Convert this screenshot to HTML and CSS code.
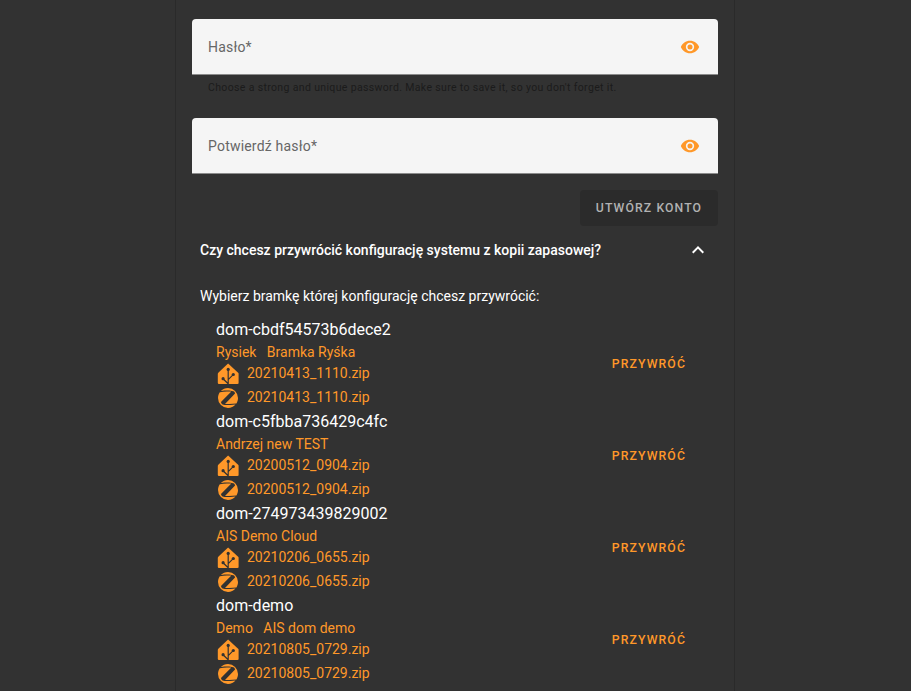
FILE: index.html
```
<!DOCTYPE html>
<html lang="pl">
<head>
<meta charset="utf-8">
<title>AIS dom</title>
<link rel="stylesheet" href="styles.css">
</head>
<body>
<svg class="sprite" aria-hidden="true">
  <symbol id="eye" viewBox="0 0 24 24"><path d="M12,9A3,3 0 0,0 9,12A3,3 0 0,0 12,15A3,3 0 0,0 15,12A3,3 0 0,0 12,9M12,17A5,5 0 0,1 7,12A5,5 0 0,1 12,7A5,5 0 0,1 17,12A5,5 0 0,1 12,17M12,4.5C7,4.5 2.73,7.61 1,12C2.73,16.39 7,19.5 12,19.5C17,19.5 21.27,16.39 23,12C21.27,7.61 17,4.5 12,4.5Z"/></symbol>
  <symbol id="home" viewBox="0 0 24 24">
    <path d="M12.1,1.6L22.1,10.8Q22.6,11.3 22.6,12V21Q22.6,22.1 21.4,22.1H3Q1.8,22.1 1.8,21V12Q1.8,11.3 2.3,10.8Z"/>
    <path class="branch" d="M12.2,7V23M12.2,17.6L17.2,12.6M12.2,21.8L7,16.8"/>
    <circle class="node" cx="12.2" cy="7.4" r="1.6"/><circle class="node" cx="17.3" cy="12.5" r="1.6"/><circle class="node" cx="7.1" cy="16.7" r="1.6"/>
  </symbol>
  <symbol id="zigbee" viewBox="0 0 24 24"><path d="M4.06,6.15C3.97,6.17 3.88,6.22 3.8,6.28C2.66,7.9 2,9.87 2,12A10,10 0 0,0 12,22C15,22 17.68,20.68 19.5,18.6L17,18.85C14.25,19.15 11.45,19.19 8.66,18.96C7.95,18.94 7.24,18.76 6.59,18.45C5.73,18.06 5.15,17.23 5.07,16.29C5.06,16.13 5.12,16 5.23,15.87L7.42,13.6L15.1,5.7V5.6H10.84C8.57,5.64 6.31,5.82 4.06,6.15M20.17,17.5C20.26,17.47 20.35,17.44 20.43,17.39C21.42,15.83 22,14 22,12A10,10 0 0,0 12,2C9.22,2 6.7,3.13 4.89,4.97H5.17C8.28,4.57 11.43,4.47 14.56,4.65C15.5,4.64 16.45,4.82 17.33,5.17C18.25,5.53 18.89,6.38 19,7.37C19,7.53 18.93,7.7 18.82,7.82L9.71,17.19L9,17.95V18.06H13.14C15.5,18 17.84,17.81 20.17,17.5Z"/></symbol>
  <symbol id="chevron" viewBox="0 0 24 24"><path d="M7.41,15.41L12,10.83L16.59,15.41L18,14L12,8L6,14L7.41,15.41Z"/></symbol>
</svg>
<main class="card">
  <div class="field"><span>Hasło*</span><svg class="eye"><use href="#eye"/></svg></div>
  <p class="helper">Choose a strong and unique password. Make sure to save it, so you don't forget it.</p>
  <div class="field"><span>Potwierdź hasło*</span><svg class="eye"><use href="#eye"/></svg></div>
  <div class="actions"><button class="create">Utwórz konto</button></div>
  <div class="panel-head"><span>Czy chcesz przywrócić konfigurację systemu z kopii zapasowej?</span><svg class="icon"><use href="#chevron"/></svg></div>
  <p class="intro">Wybierz bramkę której konfigurację chcesz przywrócić:</p>
  <ul class="gates">
    <li class="gate">
      <div><div class="name">dom-cbdf54573b6dece2</div><div class="users">Rysiek &nbsp; Bramka Ryśka</div>
      <div class="file"><svg class="icon"><use href="#home"/></svg><span>20210413_1110.zip</span></div>
      <div class="file"><svg class="icon"><use href="#zigbee"/></svg><span>20210413_1110.zip</span></div></div>
      <button class="restore">Przywróć</button>
    </li>
    <li class="gate">
      <div><div class="name">dom-c5fbba736429c4fc</div><div class="users">Andrzej new TEST</div>
      <div class="file"><svg class="icon"><use href="#home"/></svg><span>20200512_0904.zip</span></div>
      <div class="file"><svg class="icon"><use href="#zigbee"/></svg><span>20200512_0904.zip</span></div></div>
      <button class="restore">Przywróć</button>
    </li>
    <li class="gate">
      <div><div class="name">dom-274973439829002</div><div class="users">AIS Demo Cloud</div>
      <div class="file"><svg class="icon"><use href="#home"/></svg><span>20210206_0655.zip</span></div>
      <div class="file"><svg class="icon"><use href="#zigbee"/></svg><span>20210206_0655.zip</span></div></div>
      <button class="restore">Przywróć</button>
    </li>
    <li class="gate">
      <div><div class="name">dom-demo</div><div class="users">Demo &nbsp; AIS dom demo</div>
      <div class="file"><svg class="icon"><use href="#home"/></svg><span>20210805_0729.zip</span></div>
      <div class="file"><svg class="icon"><use href="#zigbee"/></svg><span>20210805_0729.zip</span></div></div>
      <button class="restore">Przywróć</button>
    </li>
  </ul>
</main>
</body>
</html>
```
FILE: styles.css
```
* { box-sizing: border-box; }
body {
  margin: 0;
  height: 691px;
  overflow: hidden;
  background: #323232;
  color: #fff;
  font: 14px/20px Roboto, sans-serif;
}
p, ul { margin: 0; padding: 0; list-style: none; }
button { border: 0; font: 500 12.25px/36px Roboto, sans-serif; letter-spacing: 0.0892857em; text-transform: uppercase; }
.sprite { display: none; }
.icon { width: 24px; height: 24px; flex: none; fill: currentColor; }
.card {
  width: 560px;
  height: 720px;
  margin-left: 175px;
  padding: 19px 16px 0;
  border: solid #2a2a2a;
  border-width: 0 1px;
}
.field {
  display: flex;
  align-items: center;
  justify-content: space-between;
  height: 56px;
  padding: 0 18px 0 16px;
  border-bottom: 1px solid #8b8b8b;
  border-radius: 4px 4px 0 0;
  background: #f5f5f5;
  color: #666;
  letter-spacing: 0.2px;
}
.eye { width: 20px; height: 20px; fill: #ff9829; }
.helper { height: 43px; padding: 3px 16px 0; color: #1b1b1b; font-size: 10.5px; letter-spacing: 0.35px; }
.actions { display: flex; justify-content: flex-end; padding-top: 16px; }
.create { width: 138px; height: 36px; padding: 0; border-radius: 4px; background: #2b2b2b; color: #b2b2b2; }
.panel-head { display: flex; align-items: center; justify-content: space-between; height: 48px; padding: 0 8px; font-weight: 500; }
.intro { margin-top: 12px; padding-left: 8px; }
.gates { margin-top: 12px; padding: 0 24px; }
.gate { display: flex; align-items: center; justify-content: space-between; height: 92px; }
.name { font-size: 16px; line-height: 24px; }
.users, .file { color: #ff9829; }
.file { display: flex; gap: 7px; height: 24px; line-height: 22px; }
.branch { fill: none; stroke: #323232; stroke-width: 1.2; }
.node { fill: #323232; }
.restore { padding: 0 8px; background: none; color: #ff9829; }
```
